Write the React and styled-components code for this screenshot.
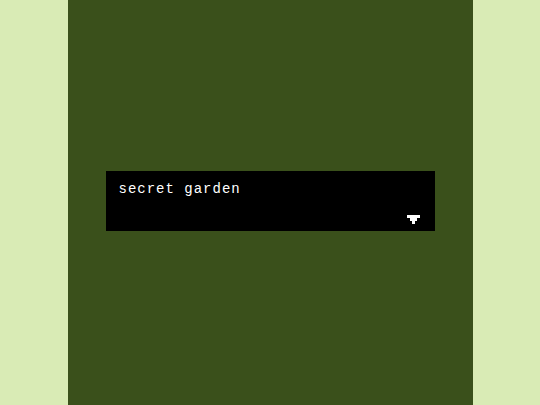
import React from 'react';
import styled, { createGlobalStyle } from 'styled-components';

const GlobalStyle = createGlobalStyle`
  html, body {
    margin: 0;
    padding: 0;
    background-color: #d9ebb5;
  }
`;

const Page = styled.div`
  width: 540px;
  height: 405px;
  display: flex;
  justify-content: center;
  background-color: #d9ebb5;
`;

const Screen = styled.div`
  width: 405px;
  height: 405px;
  background-color: #3a501b;
  display: flex;
  align-items: center;
  justify-content: center;
`;

const DialogBox = styled.div`
  width: 329px;
  height: 60px;
  margin-top: -3px;
  box-sizing: border-box;
  background-color: #000;
  padding: 9px 15px 7px 13px;
  display: flex;
  flex-direction: column;
  justify-content: space-between;
`;

const DialogText = styled.p`
  margin: 0;
  font-family: 'Liberation Mono', 'DejaVu Sans Mono', monospace;
  font-size: 14px;
  line-height: 18px;
  letter-spacing: 1px;
  color: #fff;
  -webkit-font-smoothing: none;
`;

const ArrowRow = styled.div`
  display: flex;
  justify-content: flex-end;
`;

const NextArrow = () => (
  <svg width="13" height="9" viewBox="0 0 13 9" shapeRendering="crispEdges">
    <path d="M0 0H13V3H10V6H8V9H5V6H3V3H0Z" fill="#fff" />
  </svg>
);

const App = () => (
  <>
    <GlobalStyle />
    <Page>
      <Screen>
        <DialogBox>
          <DialogText>secret garden</DialogText>
          <ArrowRow>
            <NextArrow />
          </ArrowRow>
        </DialogBox>
      </Screen>
    </Page>
  </>
);

export default App;
